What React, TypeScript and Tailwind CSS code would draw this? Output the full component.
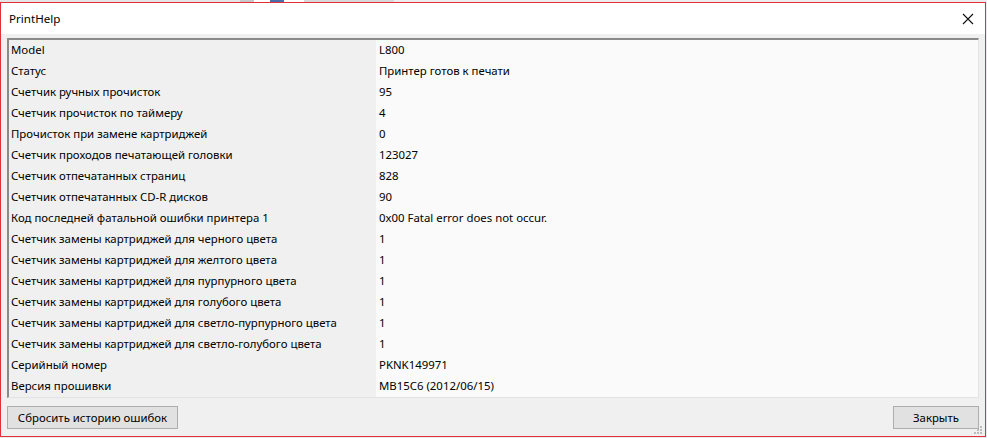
import React from "react";

const rows: [string, string][] = [
  ["Model", "L800"],
  ["Статус", "Принтер готов к печати"],
  ["Счетчик ручных прочисток", "95"],
  ["Счетчик прочисток по таймеру", "4"],
  ["Прочисток при замене картриджей", "0"],
  ["Счетчик проходов печатающей головки", "123027"],
  ["Счетчик отпечатанных страниц", "828"],
  ["Счетчик отпечатанных CD-R дисков", "90"],
  ["Код последней фатальной ошибки принтера 1", "0x00 Fatal error does not occur."],
  ["Счетчик замены картриджей для черного цвета", "1"],
  ["Счетчик замены картриджей для желтого цвета", "1"],
  ["Счетчик замены картриджей для пурпурного цвета", "1"],
  ["Счетчик замены картриджей для голубого цвета", "1"],
  ["Счетчик замены картриджей для светло-пурпурного цвета", "1"],
  ["Счетчик замены картриджей для светло-голубого цвета", "1"],
  ["Серийный номер", "PKNK149971"],
  ["Версия прошивки", "MB15C6 (2012/06/15)"],
];

function CloseIcon() {
  return (
    <svg width="12" height="12" viewBox="0 0 12 12" className="block">
      <path d="M1 1 L11 11 M11 1 L1 11" stroke="#111" strokeWidth="1.1" fill="none" />
    </svg>
  );
}

function Grip() {
  const dots: [number, number][] = [
    [6, 0],
    [3, 3],
    [6, 3],
    [0, 6],
    [3, 6],
    [6, 6],
  ];
  return (
    <svg width="8" height="8" viewBox="0 0 8 8" className="absolute right-[3px] bottom-[2px]">
      {dots.map(([x, y], i) => (
        <rect key={i} x={x} y={y} width="2" height="2" fill="#bcbcbc" />
      ))}
    </svg>
  );
}

export default function App() {
  return (
    <div
      className="w-[987px] h-[438px] bg-[#ececec] overflow-hidden text-black"
      style={{ fontFamily: '"Noto Sans", "Segoe UI", sans-serif' }}
    >
      {/* desktop sliver behind the dialog */}
      <div className="h-[2px] flex">
        <div className="w-[240px] bg-[#e4e4e4]" />
        <div className="w-[14px] bg-[#c8c8c8]" />
        <div className="w-[16px] bg-white" />
        <div className="w-[14px] bg-[#4a6ea9]" />
        <div className="w-[20px] bg-white" />
        <div className="w-[90px] bg-[#d8d8d8]" />
      </div>

      <div className="w-[986px] h-[435px] border border-[#e0303a] flex flex-col">
        {/* caption */}
        <div className="h-[31px] bg-white flex items-center justify-between pl-[8px] pr-[11px]">
          <span className="text-[11.6px] leading-none">PrintHelp</span>
          <CloseIcon />
        </div>

        {/* client area */}
        <div className="flex-1 bg-[#f0f0f0] px-[6px] pt-[4px] flex flex-col relative">
          <div className="h-[360px] border-t-2 border-l-2 border-t-[#8a8a8a] border-l-[#8a8a8a] border-r border-b border-r-[#e3e3e3] border-b-[#e3e3e3] bg-[#fafafa] flex flex-col">
            {rows.map(([k, v]) => (
              <div key={k} className="h-[21px] flex text-[11.4px] leading-[20px]">
                <div className="w-[367px] bg-[#f0f0f0] pl-[2px] whitespace-nowrap">{k}</div>
                <div className="flex-1 pl-[3px] whitespace-nowrap">{v}</div>
              </div>
            ))}
          </div>

          <div className="flex justify-between mt-[8px]">
            <button className="w-[171px] h-[23px] bg-[#e1e1e1] border border-[#adadad] text-[11.4px] leading-none">
              Сбросить историю ошибок
            </button>
            <button className="w-[86px] h-[23px] bg-[#e1e1e1] border border-[#adadad] text-[11.4px] leading-none">
              Закрыть
            </button>
          </div>
          <Grip />
        </div>
      </div>
    </div>
  );
}
